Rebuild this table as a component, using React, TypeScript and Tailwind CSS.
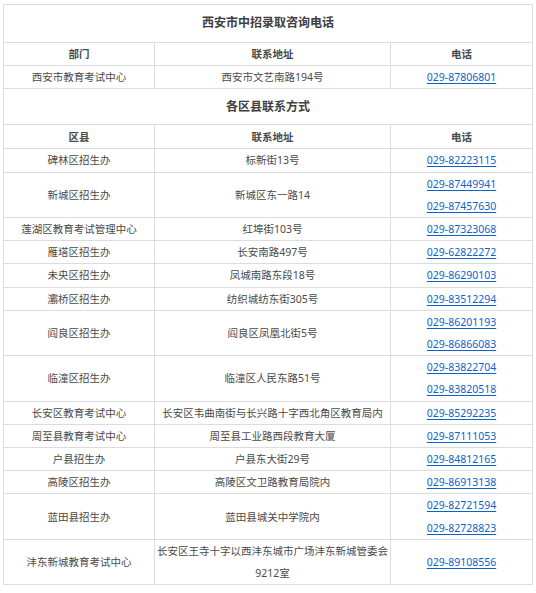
const font = { fontFamily: '"Noto Sans", "Noto Sans CJK SC", sans-serif' };

type Row = { area: string; addr: React.ReactNode; phones: string[] };

const rows: Row[] = [
  { area: "碑林区招生办", addr: "标新街13号", phones: ["029-82223115"] },
  { area: "新城区招生办", addr: "新城区东一路14", phones: ["029-87449941", "029-87457630"] },
  { area: "莲湖区教育考试管理中心", addr: "红埠街103号", phones: ["029-87323068"] },
  { area: "雁塔区招生办", addr: "长安南路497号", phones: ["029-62822272"] },
  { area: "未央区招生办", addr: "凤城南路东段18号", phones: ["029-86290103"] },
  { area: "灞桥区招生办", addr: "纺织城纺东街305号", phones: ["029-83512294"] },
  { area: "阎良区招生办", addr: "阎良区凤凰北街5号", phones: ["029-86201193", "029-86866083"] },
  { area: "临潼区招生办", addr: "临潼区人民东路51号", phones: ["029-83822704", "029-83820518"] },
  { area: "长安区教育考试中心", addr: "长安区韦曲南街与长兴路十字西北角区教育局内", phones: ["029-85292235"] },
  { area: "周至县教育考试中心", addr: "周至县工业路西段教育大厦", phones: ["029-87111053"] },
  { area: "户县招生办", addr: "户县东大街29号", phones: ["029-84812165"] },
  { area: "高陵区招生办", addr: "高陵区文卫路教育局院内", phones: ["029-86913138"] },
  { area: "蓝田县招生办", addr: "蓝田县城关中学院内", phones: ["029-82721594", "029-82728823"] },
  {
    area: "沣东新城教育考试中心",
    addr: (
      <>
        长安区王寺十字以西沣东城市广场沣东新城管委会
        <br />
        9212室
      </>
    ),
    phones: ["029-89108556"],
  },
];

const cell = "border border-[#dcdcdc] text-center align-middle p-0";

function Phone({ n }: { n: string }) {
  return (
    <div>
      <a href="#" className="text-[#0b63c9] underline underline-offset-2 decoration-[#0b63c9]">
        {n}
      </a>
    </div>
  );
}

export default function App() {
  return (
    <div className="bg-white w-[536px] h-[593px] pl-[3px] pt-[4px]" style={font}>
      <table className="border-collapse w-[529px] table-fixed text-[10.5px] leading-[22.2px] text-[#4a4a4a]">
        <colgroup>
          <col className="w-[151px]" />
          <col className="w-[236px]" />
          <col className="w-[142px]" />
        </colgroup>
        <tbody>
          <tr className="h-[38px]">
            <td colSpan={3} className={`${cell} text-[12px] font-bold text-[#404040]`}>
              西安市中招录取咨询电话
            </td>
          </tr>
          <tr className="h-[23px]">
            <td className={`${cell} font-bold`}>部门</td>
            <td className={`${cell} font-bold`}>联系地址</td>
            <td className={`${cell} font-bold`}>电话</td>
          </tr>
          <tr className="h-[23px]">
            <td className={cell}>西安市教育考试中心</td>
            <td className={cell}>西安市文艺南路194号</td>
            <td className={cell}>
              <Phone n="029-87806801" />
            </td>
          </tr>
          <tr className="h-[36px]">
            <td colSpan={3} className={`${cell} text-[12px] font-bold text-[#404040]`}>
              各区县联系方式
            </td>
          </tr>
          <tr className="h-[24px]">
            <td className={`${cell} font-bold`}>区县</td>
            <td className={`${cell} font-bold`}>联系地址</td>
            <td className={`${cell} font-bold`}>电话</td>
          </tr>
          {rows.map((r) => (
            <tr key={r.area}>
              <td className={cell}>{r.area}</td>
              <td className={cell}>{r.addr}</td>
              <td className={cell}>
                {r.phones.map((p) => (
                  <Phone key={p} n={p} />
                ))}
              </td>
            </tr>
          ))}
        </tbody>
      </table>
    </div>
  );
}
